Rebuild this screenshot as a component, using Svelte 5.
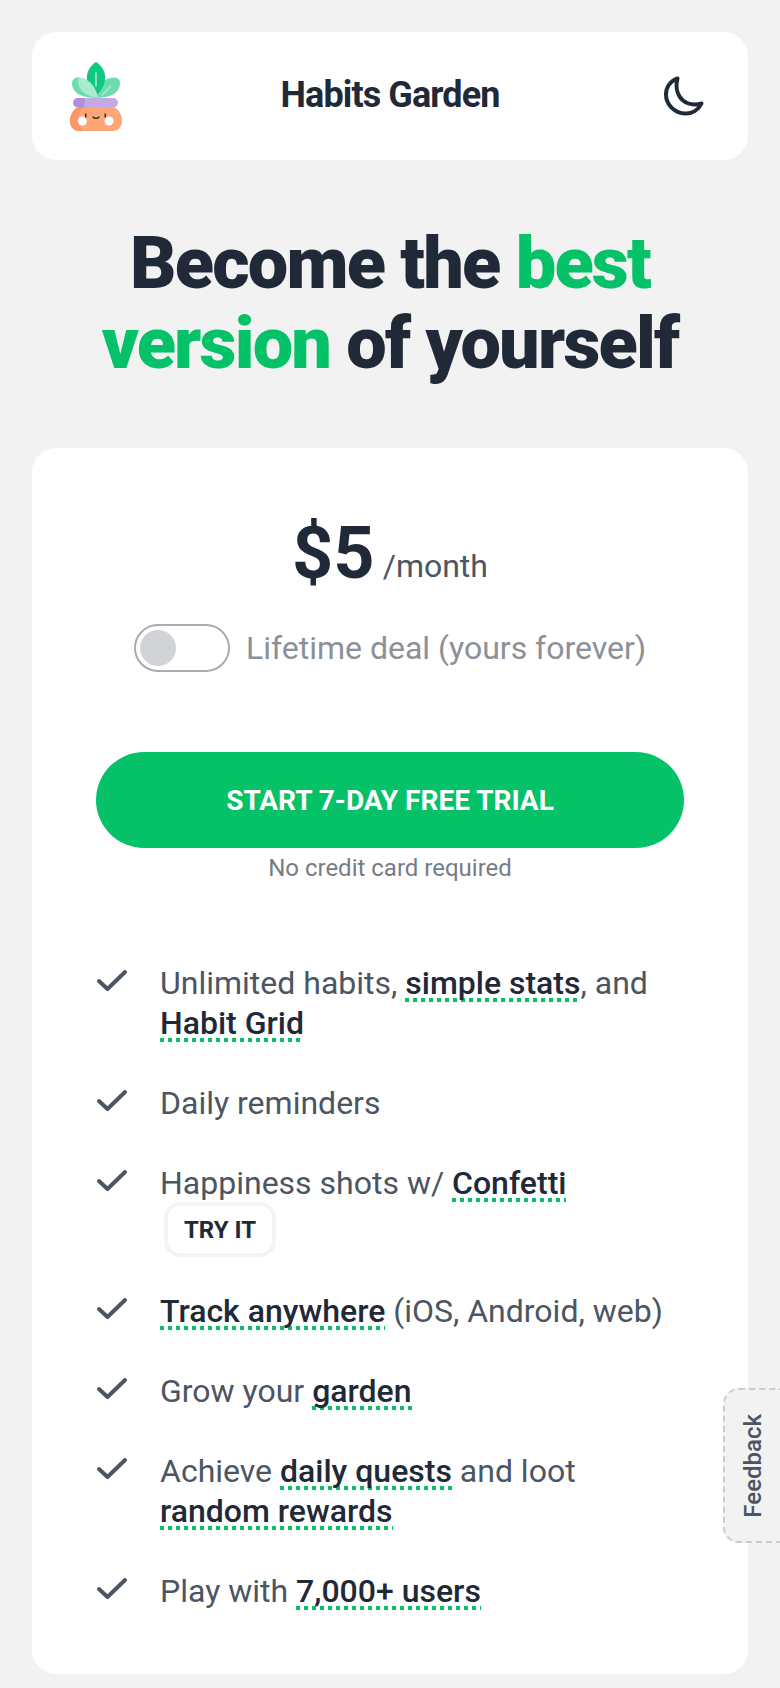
<script>
	const features = [
		[['Unlimited habits, ', false], ['simple stats', true], [', and ', false], ['Habit Grid', true]],
		[['Daily reminders', false]],
		[['Happiness shots w/ ', false], ['Confetti', true]],
		[['Track anywhere', true], [' (iOS, Android, web)', false]],
		[['Grow your ', false], ['garden', true]],
		[['Achieve ', false], ['daily quests', true], [' and loot ', false], ['random rewards', true]],
		[['Play with ', false], ['7,000+ users', true]]
	];
</script>

<div class="page">
	<header class="topbar">
		<svg class="logo" viewBox="0 0 52 69" width="52" height="69" aria-hidden="true">
			<path d="M2 21c0-3 2-5.500 6-5.500 10 0 18 9 20 20.500C13 36 2 32 2 21z" fill="#6fdcb0" />
			<path d="M50 21c0-3-2-5.500-6-5.500-10 0-18 9-20 20.500 15 0 26-4 26-15z" fill="#6fdcb0" />
			<path d="M26 0c7 4 10 12 9 18-1 7-5 12-9 16-4-4-8-9-9-16-1-6 2-14 9-18z" fill="#10c880" />
			<path d="M8 19c0-2 2-3.500 4-3 8 2 14 9 16 20C17 34 8 29 8 19z" fill="#a8ecd0" />
			<path d="M26 11v13M41 24l-9 9" stroke="#a8ecd0" stroke-width="1.500" fill="none" stroke-linecap="round" />
			<path d="M8 45h36c4 2 8 7 8 14 0 6-4 10-9 10H9c-5 0-9-4-9-10 0-7 4-12 8-14z" fill="#ffa678" />
			<path d="M8 45h5c-3 4-5 9-4 14 0 4 2 8 5 10H9c-5 0-9-4-9-10 0-7 4-12 8-14z" fill="#fb9766" />
			<rect x="3" y="36" width="45" height="9.500" rx="4.700" fill="#c4a9e4" />
			<path d="M8 36h7l-1 9.500H8a4.700 4.700 0 0 1 0-9.500z" fill="#b08fd8" />
			<circle cx="12.300" cy="59" r="4.500" fill="#fff" />
			<circle cx="39" cy="59" r="4.500" fill="#fff" />
			<path d="M15.700 52v3M35.300 52v3" stroke="#3a2a2a" stroke-width="1.500" stroke-linecap="round" />
			<path d="M23 55c1.500 1.800 4.500 1.800 6 0" stroke="#3a2a2a" stroke-width="1.500" fill="none" stroke-linecap="round" />
		</svg>
		<div class="brand">Habits Garden</div>
		<svg class="moon" viewBox="0 0 40 40" width="40" height="40" fill="none" aria-hidden="true">
			<path d="M13.500 2.500C11 12 14 20 19 24.500c4.500 3.500 11 5 18.500 3C34.500 34 28 38 21 37.500 10.500 37 2 28.500 2 18.500 2 11 6.500 5 13.500 2.500z" stroke="#1f2937" stroke-width="4" stroke-linejoin="round" />
		</svg>
	</header>

	<h1 class="headline">Become the <span class="accent">best version</span> of yourself</h1>

	<section class="card">
		<div class="price">
			<span class="amount">$5</span>
			<span class="period">/month</span>
		</div>
		<div class="deal">
			<span class="toggle"><span class="knob"></span></span>
			<span class="deal-label">Lifetime deal (yours forever)</span>
		</div>
		<button class="cta">START 7-DAY FREE TRIAL</button>
		<p class="note">No credit card required</p>
		<ul class="features">
			{#each features as parts, i}
				<li>
					<svg class="check" viewBox="0 0 32 24" width="32" height="24" fill="none" aria-hidden="true">
						<path d="M3 12l8.500 8L29 3" stroke="#4b5563" stroke-width="4" stroke-linecap="round" stroke-linejoin="round" />
					</svg>
					<div class="feature-text">
						{#each parts as [text, strong]}
							{#if strong}<span class="link">{text}</span>{:else}{text}{/if}
						{/each}
						{#if i === 2}<span class="try">TRY IT</span>{/if}
					</div>
				</li>
			{/each}
		</ul>
	</section>

	<div class="feedback"><span>Feedback</span></div>
</div>

<style>
	:global(body) {
		margin: 0;
		background: #f2f2f2;
	}
	.page {
		position: relative;
		height: 1688px;
		overflow: hidden;
		box-sizing: border-box;
		padding: 32px;
		font-family: Roboto, sans-serif;
		color: #1f2937;
	}
	.topbar {
		display: grid;
		grid-template-columns: 1fr auto 1fr;
		align-items: center;
		height: 128px;
		padding: 0 38px;
		background: #fff;
		border-radius: 24px;
	}
	.moon {
		justify-self: end;
		margin-right: 6px;
	}
	.brand {
		padding-bottom: 2px;
		font-size: 36px;
		font-weight: 700;
		letter-spacing: -0.9px;
	}
	.headline {
		margin: 64px 0;
		font-size: 72px;
		font-weight: 900;
		line-height: 80px;
		letter-spacing: -1.8px;
		text-align: center;
	}
	.accent {
		color: #05c168;
	}
	.card {
		height: 1226px;
		box-sizing: border-box;
		padding: 70px 64px 0;
		background: #fff;
		border-radius: 24px;
	}
	.price {
		display: flex;
		align-items: flex-end;
		justify-content: center;
		gap: 8px;
		height: 72px;
	}
	.amount {
		font-size: 72px;
		font-weight: 700;
		line-height: 72px;
	}
	.period {
		font-size: 32px;
		line-height: 48px;
		color: #4b5563;
	}
	.deal {
		display: flex;
		align-items: center;
		justify-content: center;
		gap: 16px;
		margin-top: 34px;
	}
	.toggle {
		display: flex;
		align-items: center;
		box-sizing: border-box;
		width: 96px;
		height: 48px;
		padding: 0 4px;
		border: 2px solid #a9acb2;
		border-radius: 24px;
	}
	.knob {
		width: 36px;
		height: 36px;
		border-radius: 50%;
		background: #d1d3d7;
	}
	.deal-label {
		font-size: 32px;
		color: #8b9099;
	}
	.cta {
		display: block;
		width: 100%;
		height: 96px;
		margin-top: 80px;
		border: 0;
		border-radius: 48px;
		background: #05c168;
		color: #fff;
		font: 700 28px Roboto, sans-serif;
	}
	.note {
		margin: 4px 0 0;
		font-size: 24px;
		line-height: 32px;
		color: #767c87;
		text-align: center;
	}
	.features {
		list-style: none;
		margin: 79px 0 0;
		padding: 0;
		display: flex;
		flex-direction: column;
		gap: 40px;
	}
	.features li {
		display: flex;
		gap: 32px;
		font-size: 32px;
		line-height: 40px;
		color: #4b5563;
	}
	.check {
		flex: none;
		margin-top: 6px;
	}
	.feature-text {
		flex: 1;
	}
	.link {
		font-weight: 500;
		color: #1f2937;
		background: linear-gradient(to right, #05c168 50%, transparent 50%) left bottom / 8px 4px repeat-x;
	}
	.try {
		display: inline-block;
		box-sizing: border-box;
		height: 55px;
		padding: 0 16px;
		margin: -1px 0 -6px 4px;
		border: 4px solid #f3f4f6;
		border-radius: 16px;
		font-size: 24px;
		font-weight: 700;
		line-height: 48px;
		color: #1f2937;
		vertical-align: top;
	}
	.feedback {
		position: absolute;
		right: 0;
		top: 1388px;
		display: flex;
		align-items: center;
		justify-content: center;
		box-sizing: border-box;
		width: 57px;
		height: 155px;
		background: #f2f2f2;
		border: 2px dashed #c9cbd0;
		border-right: 0;
		border-radius: 16px 0 0 16px;
	}
	.feedback span {
		writing-mode: vertical-rl;
		transform: rotate(180deg);
		font-size: 24px;
		font-weight: 500;
		color: #4b5563;
	}
</style>
